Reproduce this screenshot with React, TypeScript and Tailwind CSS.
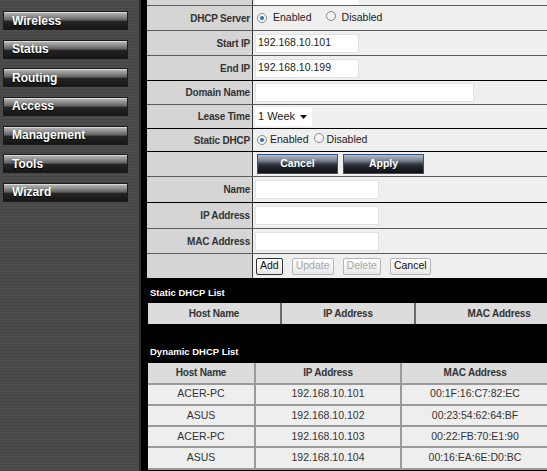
import React from 'react';

const menu = ['Wireless', 'Status', 'Routing', 'Access', 'Management', 'Tools', 'Wizard'];

const dynamicList = [
  { host: 'ACER-PC', ip: '192.168.10.101', mac: '00:1F:16:C7:82:EC' },
  { host: 'ASUS', ip: '192.168.10.102', mac: '00:23:54:62:64:BF' },
  { host: 'ACER-PC', ip: '192.168.10.103', mac: '00:22:FB:70:E1:90' },
  { host: 'ASUS', ip: '192.168.10.104', mac: '00:16:EA:6E:D0:BC' },
];

const font = { fontFamily: '"Liberation Sans", Arial, sans-serif' };

const Radio = ({ checked }: { checked?: boolean }) => (
  <span className="inline-flex w-[10px] h-[10px] rounded-full border border-[#8c8c8c] bg-[#f4f4f4] items-center justify-center">
    {checked && <span className="w-[4px] h-[4px] rounded-full bg-[#2a6fb5]" />}
  </span>
);

const Row = ({
  label,
  h,
  line = 'border-[#5c5c5c]',
  children,
}: {
  label?: string;
  h: string;
  line?: string;
  children?: React.ReactNode;
}) => (
  <div className={`flex border-b ${line} ${h}`}>
    <div className="w-[106px] shrink-0 bg-[#d5d5d5] border-r border-[#3a3a3a] flex items-center justify-end pr-[2px] text-[10px] tracking-[-0.2px] font-bold text-[#333]">
      {label}
    </div>
    <div className="flex-1 bg-[#efefef] flex items-center pl-[2px] text-[10.5px] text-[#222]">{children}</div>
  </div>
);

const TextBox = ({ w, value }: { w: string; value?: string }) => (
  <div className={`${w} h-[19px] bg-white border border-[#e2e2e2] flex items-center pl-[2px] text-[10.5px] text-[#222]`}>
    {value}
  </div>
);

const SmallButton = ({ label, disabled, focus }: { label: string; disabled?: boolean; focus?: boolean }) => (
  <div
    className={`h-[17px] px-[3px] rounded-[2px] border flex items-center justify-center bg-gradient-to-b from-white to-[#e8e8e8] text-[10.5px] ${
      focus ? 'border-[#333]' : 'border-[#b5b5b5]'
    } ${disabled ? 'text-[#a8a8a8]' : 'text-[#111]'}`}
  >
    {label}
  </div>
);

const ActionButton = ({ label }: { label: string }) => (
  <div className="w-[81px] h-[20px] border border-[#30527c] flex items-center justify-center text-white text-[10.5px] font-bold bg-[linear-gradient(to_bottom,#b4bcc6_0%,#7b8491_30%,#2a2f36_55%,#0c0e11_100%)]">
    {label}
  </div>
);

export default function App() {
  return (
    <div className="w-[547px] h-[471px] overflow-hidden flex bg-black" style={font}>
      {/* sidebar */}
      <div className="w-[141px] shrink-0 h-full bg-[repeating-linear-gradient(to_bottom,#4c4c4c_0px,#4c4c4c_2px,#444444_2px,#444444_3px)] border-r-2 border-[#2e2e2e] flex flex-col gap-[9.67px] pt-[11px] pl-[3px]">
        {menu.map(m => (
          <div
            key={m}
            className="w-[125px] h-[19px] border border-[#1b1b1b] shadow-[inset_0_1px_0_#d8d8d8] flex items-center pl-[8px] text-white text-[12px] font-bold [text-shadow:0_1px_1px_#000] bg-[linear-gradient(to_bottom,#bdbdbd_0%,#8e8e8e_25%,#5e5e5e_48%,#262626_54%,#161616_100%)]"
          >
            {m}
          </div>
        ))}
      </div>

      <div className="w-[6px] shrink-0" />

      {/* main */}
      <div className="flex-1 min-w-0 overflow-hidden">
        <div>
          <Row h="h-[6px]">
            <div className="w-[104px] h-[5px] bg-white self-start" />
          </Row>
          <Row label="DHCP Server" h="h-[25px]">
            <div className="flex items-center gap-[6px] pl-[2px]">
              <Radio checked />
              <span>Enabled</span>
              <span className="ml-[8px]">
                <Radio />
              </span>
              <span>Disabled</span>
            </div>
          </Row>
          <Row label="Start IP" h="h-[25px]">
            <TextBox w="w-[104px]" value="192.168.10.101" />
          </Row>
          <Row label="End IP" h="h-[25px]" line="border-black">
            <TextBox w="w-[104px]" value="192.168.10.199" />
          </Row>
          <Row label="Domain Name" h="h-[24px]">
            <TextBox w="w-[219px]" />
          </Row>
          <Row label="Lease Time" h="h-[24px]" line="border-black">
            <div className="w-[57px] h-[19px] bg-white flex items-center justify-between pl-[3px] pr-[5px] text-[11px]">
              <span>1 Week</span>
              <svg width="7" height="4" viewBox="0 0 7 4">
                <path d="M0 0h7L3.5 4z" fill="#111" />
              </svg>
            </div>
          </Row>
          <Row label="Static DHCP" h="h-[23px]" line="border-black">
            <div className="flex items-center gap-[3px] pl-[2px]">
              <Radio checked />
              <span>Enabled</span>
              <span className="ml-[2px]">
                <Radio />
              </span>
              <span>Disabled</span>
            </div>
          </Row>
          <Row h="h-[25px]">
            <div className="flex gap-[5px] pl-[2px]">
              <ActionButton label="Cancel" />
              <ActionButton label="Apply" />
            </div>
          </Row>
          <Row label="Name" h="h-[26px]" line="border-black">
            <TextBox w="w-[124px]" />
          </Row>
          <Row label="IP Address" h="h-[26px]">
            <TextBox w="w-[124px]" />
          </Row>
          <Row label="MAC Address" h="h-[25px]">
            <TextBox w="w-[124px]" />
          </Row>
          <Row h="h-[25px]" line="border-black">
            <div className="flex gap-[9px] pl-[1px]">
              <SmallButton label="Add" focus />
              <SmallButton label="Update" disabled />
              <SmallButton label="Delete" disabled />
              <SmallButton label="Cancel" />
            </div>
          </Row>
        </div>

        {/* static list */}
        <div className="pl-[3px] pt-[7px] text-white text-[9.5px] font-bold">Static DHCP List</div>
        <div className="mt-[3px] ml-[1px] w-[434px] flex h-[21px] bg-[#dcdcdc] text-[10px] tracking-[-0.2px] font-bold text-[#333]">
          <div className="w-[134px] flex items-center justify-center border-r-2 border-[#6a6a6a]">Host Name</div>
          <div className="w-[134px] flex items-center justify-center border-r-2 border-[#6a6a6a]">IP Address</div>
          <div className="flex-1 flex items-center justify-center">MAC Address</div>
        </div>

        {/* dynamic list */}
        <div className="pl-[3px] pt-[21px] text-white text-[9.5px] font-bold">Dynamic DHCP List</div>
        <div className="mt-[3px] ml-[1px] w-[400px] text-[10.5px] text-[#333]">
          <div className="flex h-[22px] bg-[#dcdcdc] font-bold text-[10px] tracking-[-0.2px] border-b-2 border-[#9a9a9a]">
            <div className="w-[108px] flex items-center justify-center border-r-2 border-[#9a9a9a]">Host Name</div>
            <div className="w-[146px] flex items-center justify-center border-r-2 border-[#9a9a9a]">IP Address</div>
            <div className="flex-1 flex items-center justify-center">MAC Address</div>
          </div>
          {dynamicList.map((r, i) => (
            <div key={i} className="flex h-[21.3px] bg-[#eeeeee] border-b-2 border-[#9a9a9a]">
              <div className="w-[108px] flex items-center justify-center border-r-2 border-[#9a9a9a]">{r.host}</div>
              <div className="w-[146px] flex items-center justify-center border-r-2 border-[#9a9a9a]">{r.ip}</div>
              <div className="flex-1 flex items-center justify-center">{r.mac}</div>
            </div>
          ))}
        </div>
      </div>
    </div>
  );
}
